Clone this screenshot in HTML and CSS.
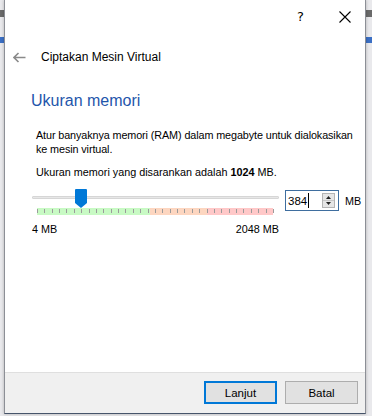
FILE: index.html
```html
<!DOCTYPE html>
<html lang="id">
<head>
<meta charset="utf-8">
<link rel="stylesheet" href="styles.css">
</head>
<body>
<div class="desktop">
  <div class="backdrop">
    <div class="bg-row"><span class="frag dark"></span><span class="frag dark right"></span></div>
    <div class="bg-row second"><span class="frag link"></span><span class="frag link right"></span></div>
  </div>
  <div class="window">
    <div class="titlebar">
      <span class="help">?</span>
      <svg class="close" width="12" height="12" viewBox="0 0 12 12"><path d="M0.5 0.5 L11.5 11.5 M11.5 0.5 L0.5 11.5" stroke="#000" stroke-width="1.1" fill="none"/></svg>
    </div>
    <div class="header">
      <svg class="back" width="13" height="11" viewBox="0 0 13 11"><path d="M1 5.5 H12.5 M5.5 1 L1 5.5 L5.5 10" stroke="#8a8a8a" stroke-width="1.6" fill="none"/></svg>
      <span class="header-title">Ciptakan Mesin Virtual</span>
    </div>
    <div class="content">
      <h1 class="page-title">Ukuran memori</h1>
      <p class="desc">Atur banyaknya memori (RAM) dalam megabyte untuk dialokasikan<br>ke mesin virtual.</p>
      <p class="rec">Ukuran memori yang disarankan adalah <b>1024</b> MB.</p>
      <div class="mem-row">
        <div class="slider">
          <div class="track"></div>
          <div class="thumb" style="left: 43px">
            <svg width="12" height="19" viewBox="0 0 12 19"><path d="M0 1 Q0 0 1 0 H11 Q12 0 12 1 V14 L6 19 L0 14 Z" fill="#0078d7"/></svg>
          </div>
          <div class="scale">
            <span class="seg green"></span><span class="seg orange"></span><span class="seg red"></span>
            <span class="ticks"></span>
          </div>
          <div class="labels"><span>4 MB</span><span>2048 MB</span></div>
        </div>
        <div class="spin">
          <span class="spin-value">384<span class="caret"></span></span>
          <span class="spin-buttons">
            <svg width="13" height="15" viewBox="0 0 13 15"><rect x="0.5" y="0.5" width="12" height="14" fill="#e6e6e6" stroke="#b4b4b4"/><line x1="1" y1="7.5" x2="12" y2="7.5" stroke="#c8c8c8"/><path d="M4 6 L6.5 3 L9 6 Z" fill="#222"/><path d="M4 9 L6.5 12 L9 9 Z" fill="#222"/></svg>
          </span>
        </div>
        <span class="unit">MB</span>
      </div>
    </div>
    <div class="footer">
      <button class="btn primary">Lanjut</button>
      <button class="btn">Batal</button>
    </div>
  </div>
</div>
</body>
</html>
```
FILE: styles.css
```css
* { box-sizing: border-box; }
html, body { margin: 0; padding: 0; }
body {
  width: 372px;
  height: 416px;
  overflow: hidden;
  font-family: "Liberation Sans", Arial, sans-serif;
  font-size: 10.8px;
  color: #000;
}
.desktop {
  position: relative;
  width: 372px;
  height: 416px;
  overflow: hidden;
  background: #e9e9ec;
}
.backdrop { padding-top: 10px; }
.bg-row {
  display: flex;
  justify-content: space-between;
  height: 7px;
}
.bg-row.second { margin-top: 20px; }
.frag { display: block; width: 4px; height: 7px; }
.frag.right { width: 6px; }
.frag.dark { background: #6a6a6a; }
.frag.link { background: #3b6fc4; height: 6px; }

.window {
  position: absolute;
  left: 4px;
  top: 0;
  width: 362px;
  height: 414px;
  background: #fff;
  border-left: 1px solid #8c8f96;
  border-right: 1px solid #8c8f96;
  border-bottom: 1px solid #46546a;
  display: flex;
  flex-direction: column;
  box-shadow: 0 0 3px rgba(0,0,0,0.25);
}
.titlebar {
  height: 34px;
  display: flex;
  align-items: center;
  justify-content: flex-end;
  padding-right: 14px;
}
.help {
  font-size: 13px;
  font-family: "DejaVu Sans", sans-serif;
  margin-right: 35px;
  line-height: 14px;
}
.close { display: block; }
.header {
  height: 46px;
  display: flex;
  align-items: center;
  padding-left: 8px;
}
.back { display: block; margin-right: 15px; }
.header-title { font-size: 12px; line-height: 16px; }

.content {
  flex: 1;
  padding: 11px 0 0 26px;
}
.page-title {
  margin: 0;
  font-weight: normal;
  font-size: 16px;
  line-height: 20px;
  color: #1f56ab;
}
.desc {
  margin: 17px 0 0 5px;
  line-height: 14px;
  white-space: nowrap;
  letter-spacing: -0.1px;
}
.rec {
  margin: 9px 0 0 5px;
  line-height: 14px;
  white-space: nowrap;
}
.rec b { font-weight: bold; }
.mem-row {
  margin-top: 10px;
  display: flex;
  align-items: flex-start;
}
.slider {
  position: relative;
  width: 247px;
  margin-left: 1px;
  padding-top: 7px;
}
.track {
  height: 3px;
  background: #e7e7e7;
  border: 1px solid #d6d6d6;
  border-radius: 1px;
}
.thumb {
  position: absolute;
  top: 0;
  width: 12px;
  height: 19px;
}
.thumb svg { display: block; }
.scale {
  position: relative;
  margin: 9px 0 0 5px;
  width: 236px;
  height: 7px;
  display: flex;
}
.seg { height: 7px; }
.seg.green { width: 113px; background: #c8fac4; }
.seg.orange { width: 57px; background: #fdd6c0; }
.seg.red { width: 66px; background: #ffc8c8; }
.ticks {
  position: absolute;
  left: 0;
  top: 1px;
  width: 237px;
  height: 4px;
  background: repeating-linear-gradient(to right, #9b9b9b 0 1px, transparent 1px 7.375px);
}
.labels {
  display: flex;
  justify-content: space-between;
  margin-top: 7px;
  line-height: 14px;
}
.spin {
  margin-left: 6px;
  margin-top: 1px;
  width: 54px;
  height: 21px;
  border: 1px solid #3f6e9f;
  display: flex;
  align-items: center;
  justify-content: space-between;
  padding: 0 3px 0 2px;
  background: #fff;
}
.spin-value {
  display: flex;
  align-items: center;
  line-height: 14px;
  font-size: 11.5px;
}
.caret {
  display: inline-block;
  width: 1px;
  height: 15px;
  background: #000;
  margin-left: 1px;
}
.spin-buttons svg { display: block; }
.unit {
  margin-left: 6px;
  margin-top: 5px;
  line-height: 14px;
}
.footer {
  height: 41px;
  background: #f0f0f0;
  border-top: 1px solid #dfdfdf;
  display: flex;
  justify-content: flex-end;
  align-items: flex-start;
  padding: 8px 7px 0 0;
  gap: 8px;
}
.btn {
  width: 73px;
  height: 23px;
  background: #e1e1e1;
  border: 1px solid #adadad;
  font-family: "Liberation Sans", Arial, sans-serif;
  font-size: 11.5px;
  color: #000;
  padding: 0;
  margin: 0;
  line-height: 14px;
}
.btn.primary { border: 2px solid #0078d7; }
```
